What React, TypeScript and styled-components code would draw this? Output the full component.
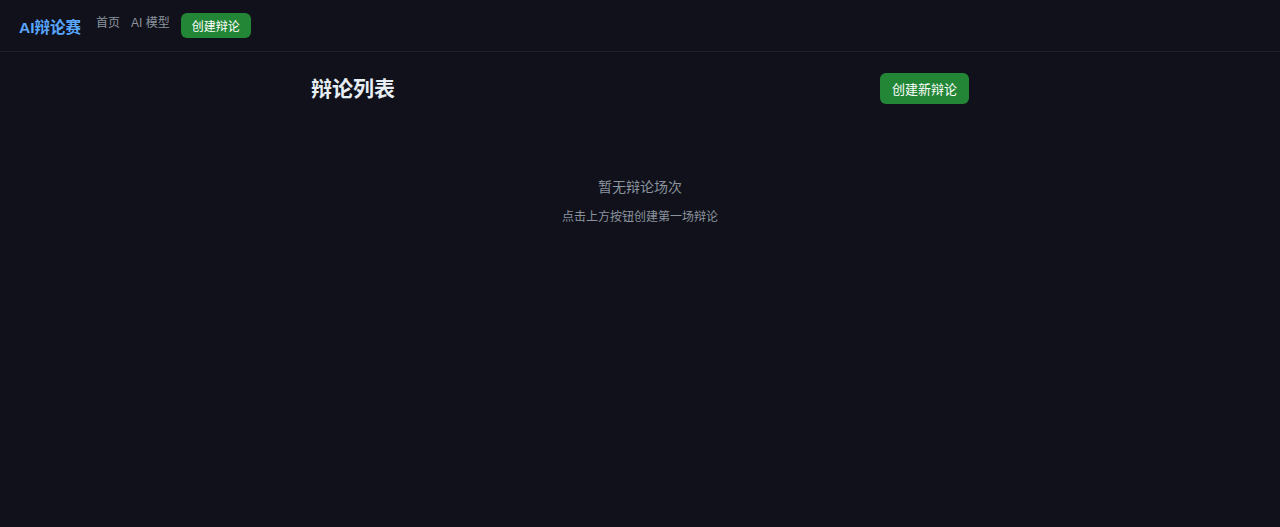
import React from 'react';
import styled, { createGlobalStyle } from 'styled-components';

const GlobalStyle = createGlobalStyle`
  html, body {
    margin: 0;
    padding: 0;
    background: #10111a;
    font-family: "Liberation Sans", "Noto Sans CJK SC", sans-serif;
    color: #e6edf3;
  }
  * { box-sizing: border-box; }
`;

export default function App() {
  return (
    <>
      <GlobalStyle />
      <Page>
        <Header>
          <Logo>AI辩论赛</Logo>
          <NavLink>首页</NavLink>
          <NavLink>AI 模型</NavLink>
          <GreenButton small>创建辩论</GreenButton>
        </Header>
        <Main>
          <TitleRow>
            <Title>辩论列表</Title>
            <GreenButton>创建新辩论</GreenButton>
          </TitleRow>
          <Empty>
            <EmptyTitle>暂无辩论场次</EmptyTitle>
            <EmptyHint>点击上方按钮创建第一场辩论</EmptyHint>
          </Empty>
        </Main>
      </Page>
    </>
  );
}

interface btnProps {
  small?: boolean;
}

const Page = styled.div`
  min-height: 527px;
  background: #10111a;
`;
const Header = styled.header`
  height: 52px;
  display: flex;
  align-items: center;
  padding: 0 19px;
  gap: 11px;
  border-bottom: 1px solid #1e2029;
`;
const Logo = styled.div`
  font-size: 15.5px;
  font-weight: bold;
  color: #58a6ff;
  margin-right: 4px;
`;
const NavLink = styled.a`
  font-size: 12px;
  color: #8b949e;
  margin-top: -8px;
  cursor: pointer;
`;
const GreenButton = styled.button<btnProps>`
  background: #238636;
  color: #ffffff;
  border: none;
  border-radius: 6px;
  font-family: inherit;
  font-size: ${(p) => (p.small ? '12px' : '13px')};
  padding: ${(p) => (p.small ? '0 11px' : '0 12px')};
  height: ${(p) => (p.small ? '25px' : '31px')};
  cursor: pointer;
`;
const Main = styled.main`
  width: 658px;
  margin: 0 auto;
  padding-top: 21px;
`;
const TitleRow = styled.div`
  display: flex;
  justify-content: space-between;
  align-items: center;
`;
const Title = styled.h2`
  margin: 0;
  font-size: 21px;
  line-height: 1;
  font-weight: bold;
  color: #e6edf3;
`;
const Empty = styled.div`
  text-align: center;
  padding-top: 72px;
`;
const EmptyTitle = styled.div`
  font-size: 14px;
  color: #8b949e;
`;
const EmptyHint = styled.div`
  font-size: 12px;
  color: #8b949e;
  margin-top: 11px;
`;
